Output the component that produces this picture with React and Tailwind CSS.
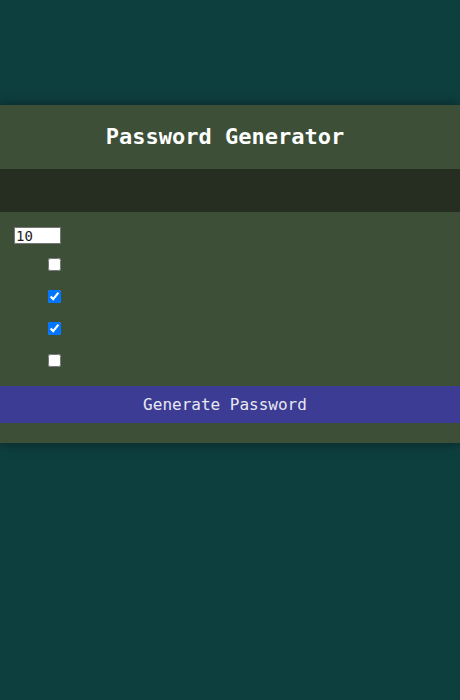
import React from "react";

export default function App() {
  return (
    <div className="w-[460px] h-[700px] bg-[#0e3f3f] pt-[105px] overflow-hidden" style={{ fontFamily: '"DejaVu Sans Mono", monospace' }}>
      <div className="bg-[#3d5037] shadow-[0_0_12px_rgba(0,0,0,0.45)] flex flex-col pb-[20px]">
        <div className="h-[64px] flex items-center justify-center pr-[10px]">
          <h1 className="text-[22px] font-bold text-white leading-none">Password Generator</h1>
        </div>
        <div className="h-[43px] bg-[#262e22]"></div>
        <div className="pt-[15px] pl-[14px]">
          <input
            type="text"
            defaultValue="10"
            readOnly
            className="block w-[47px] h-[17px] bg-white border border-[#767676] text-[14px] leading-none px-[1px] text-[#222] outline-none"
            style={{ fontFamily: '"DejaVu Sans Mono", monospace' }}
          />
        </div>
        <div className="flex flex-col pl-[48px] pt-[14px] gap-[19px]">
          <input type="checkbox" className="block w-[13px] h-[13px] m-0" />
          <input type="checkbox" defaultChecked className="block w-[13px] h-[13px] m-0" />
          <input type="checkbox" defaultChecked className="block w-[13px] h-[13px] m-0" />
          <input type="checkbox" className="block w-[13px] h-[13px] m-0" />
        </div>
        <div className="mt-[19px] h-[37px] bg-[#3c3c94] flex items-center justify-center pr-[10px]">
          <span className="text-[16px] text-[#e8e8f2] leading-none">Generate Password</span>
        </div>
      </div>
    </div>
  );
}
